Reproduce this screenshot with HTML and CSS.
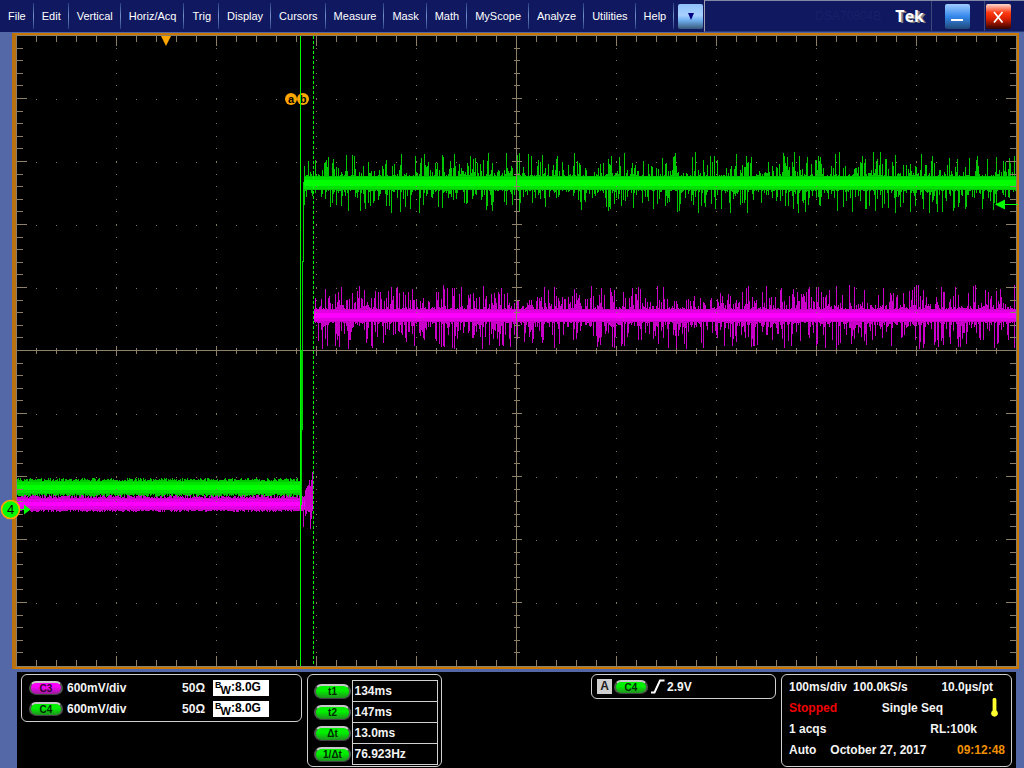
FILE: index.html
```html
<!DOCTYPE html>
<html lang="en">
<head>
<meta charset="utf-8">
<title>Oscilloscope</title>
<link rel="stylesheet" href="styles.css">
</head>
<body>
<header class="menubar">
  <nav class="menus">
    <button class="menu">File</button>
    <button class="menu">Edit</button>
    <button class="menu">Vertical</button>
    <button class="menu">Horiz/Acq</button>
    <button class="menu">Trig</button>
    <button class="menu">Display</button>
    <button class="menu">Cursors</button>
    <button class="menu">Measure</button>
    <button class="menu">Mask</button>
    <button class="menu">Math</button>
    <button class="menu">MyScope</button>
    <button class="menu">Analyze</button>
    <button class="menu">Utilities</button>
    <button class="menu">Help</button>
    <button class="more" aria-label="More menus"><svg width="8" height="8" viewBox="0 0 8 8"><path d="M1 1H7L4 8Z" fill="#000080"/></svg></button>
  </nav>
  <div class="title">
    <span class="model">DSA70804B</span>
    <span class="brand">Tek</span>
    <div class="window-cell"><button class="win minimize" aria-label="Minimize"><svg width="25" height="25" viewBox="0 0 25 25"><path d="M6 15H18V17H6Z" fill="#fff"/></svg></button></div>
    <div class="window-cell last"><button class="win close" aria-label="Close"><svg width="25" height="25" viewBox="0 0 25 25"><path d="M8 8L16.500 18.500M16.500 8L8 18.500" stroke="#fff" stroke-width="1.800"/></svg></button></div>
  </div>
</header>
<main class="scope">
  <svg class="plot" viewBox="16 35 1001 632" preserveAspectRatio="none" role="img" aria-label="Waveform display">
    <g id="traces" shape-rendering="crispEdges"></g>
    <g id="graticule" shape-rendering="crispEdges"></g>
    <g shape-rendering="crispEdges" fill="none">
      <path d="M301.500 350V505M302.500 261V430M303.500 182V262" stroke="#00d400"/>
      <path d="M300.500 36V666" stroke="#00ff00"/>
      <path d="M313.500 36V666" stroke="#00ff00" stroke-dasharray="3 2"/>
    </g>
    <path d="M161 36H171L166 46Z" fill="#ffa500"/>
    <g class="marker">
      <circle cx="291" cy="99" r="6"/><text x="291" y="103">a</text>
      <circle cx="303" cy="99" r="6"/><text x="303" y="103">b</text>
    </g>
    <path d="M300.500 93V105" stroke="#00ff00" shape-rendering="crispEdges"/>
    <path d="M995 204.500L1005 199.500V204H1018V205H1005V209.500Z" fill="#00ff00"/>
    <path d="M20 509H24V504.500L30.500 509.500L24 514.500V510H20Z" fill="#00ff00"/>
    <circle cx="10.500" cy="509.500" r="9" fill="#00ff00" stroke="#ffa500" stroke-width="1.600"/>
    <text class="channel" x="10.500" y="514">4</text>
  </svg>
</main>
<footer class="readouts">
  <section class="panel channels">
    <div class="row"><span class="pill magenta">C3</span><span class="scale">600mV/div</span><span class="ohm">50Ω</span><span class="bw"><span class="b">B</span><span class="w">W</span>:8.0G</span></div>
    <div class="row"><span class="pill">C4</span><span class="scale">600mV/div</span><span class="ohm">50Ω</span><span class="bw"><span class="b">B</span><span class="w">W</span>:8.0G</span></div>
  </section>
  <section class="panel cursors">
    <table>
      <tr><th><span class="pill wide">t1</span></th><td>134ms</td></tr>
      <tr><th><span class="pill wide">t2</span></th><td>147ms</td></tr>
      <tr><th><span class="pill wide">Δt</span></th><td>13.0ms</td></tr>
      <tr><th><span class="pill wide">1/Δt</span></th><td>76.923Hz</td></tr>
    </table>
  </section>
  <section class="panel trigger">
    <span class="source">A</span><span class="pill">C4</span>
    <svg width="15" height="15" viewBox="0 0 15 15"><path d="M1 13.500H4.500L10 1.500H14.500" fill="none" stroke="#fff" stroke-width="2"/></svg>
    <span>2.9V</span>
  </section>
  <section class="panel status">
    <div class="row timebase"><span>100ms/div</span><span>100.0kS/s</span><span class="push">10.0µs/pt</span></div>
    <div class="row sequence"><span class="stopped">Stopped</span><span class="push">Single Seq</span><svg class="thermometer" width="7" height="19" viewBox="0 0 7 19"><path d="M1.600 1.800A1.900 1.900 0 0 1 5.400 1.800V12.500A3.400 3.400 0 1 1 1.600 12.500Z" fill="#ffff30"/></svg></div>
    <div class="row acquisition"><span>1 acqs</span><span class="push">RL:100k</span></div>
    <div class="row clock"><span>Auto</span><span>October 27, 2017</span><time class="push">09:12:48</time></div>
  </section>
</footer>
<script src="scope.js"></script>
</body>
</html>
```

FILE: styles.css
```css
* { box-sizing: border-box; }

body {
  margin: 0;
  min-height: 100vh;
  display: flex;
  flex-direction: column;
  background: #5468a8;
  color: #f4f4f4;
  font-family: "Liberation Sans", Arial, sans-serif;
}

button {
  border: 0;
  padding: 0;
  color: inherit;
  font: inherit;
}

.menubar {
  display: flex;
  height: 32px;
  flex: none;
  background: #101860;
  font-size: 11px;
}

.menus {
  display: flex;
  align-items: center;
  flex: none;
}

.menu {
  height: 26px;
  padding: 0 7px 0 8px;
  background: none;
  border-right: 1px solid;
  border-image: linear-gradient(#28387c, #7090c8, #28387c) 1;
  color: #fff;
}

.more {
  width: 25px;
  height: 25px;
  margin: 0 1px 0 4px;
  display: grid;
  place-items: center;
  border-radius: 2px;
  background: linear-gradient(#90c0f8, #a8d0ff 45%, #70b0f0 65%, #385878);
}

.title {
  flex: 1;
  display: flex;
  align-items: center;
  justify-content: flex-end;
  border-top: 1px solid #8088a8;
  border-left: 1px solid #a0a0b0;
  border-bottom: 1px solid #283878;
}

.model {
  margin-right: 14px;
  color: #182068;
  font-size: 12px;
}

.brand {
  margin-right: 7px;
  color: #fff;
  font: bold 16px "Open Sans", sans-serif;
  text-shadow: 2px 1px #808080;
}

.window-cell {
  width: 53px;
  height: 100%;
  padding: 3px 0 0 13px;
  border-left: 1px solid #404878;
}

.window-cell.last {
  width: 40px;
  padding-left: 1px;
}

.win {
  display: block;
  width: 25px;
  height: 25px;
  border-radius: 2px;
}

.minimize { background: linear-gradient(#a0ccff, #3488ec 50%, #204878); }
.close { background: linear-gradient(#ffd8d0, #ff3810 35%, #d82000 60%, #300400); }

.scope {
  flex: 1;
  display: flex;
  min-height: 300px;
  margin: 1px 5px 3px 12px;
  border: 2px solid #c87800;
  border-left: 4px solid #b87010;
  background: #000;
}

.plot {
  width: 100%;
  min-width: 0;
  height: auto;
  overflow: visible;
}

.marker { fill: #ffa500; }
.marker text,
.channel {
  fill: #000;
  font-size: 11px;
  font-weight: bold;
  text-anchor: middle;
}
.channel { font-size: 13px; font-weight: normal; }

.readouts {
  flex: none;
  display: flex;
  align-items: flex-start;
  gap: 5px;
  margin: 0 8px 0 17px;
  padding: 2px 4px 1px;
  background: #000;
  font-size: 12px;
  font-weight: bold;
}

.panel {
  border: 1px solid #d0d0d0;
  border-radius: 6px;
}

.row {
  display: flex;
  align-items: center;
  height: 21px;
  white-space: nowrap;
}

.pill {
  width: 34px;
  height: 14px;
  flex: none;
  display: block;
  border: 2px solid #505850;
  border-top-color: #c8c8c8;
  border-bottom: 1px solid #404040;
  border-radius: 8px;
  background: linear-gradient(#00f000 40%, #209020);
  color: #002800;
  font-size: 10px;
  line-height: 11px;
  text-align: center;
}

.pill.magenta { background: linear-gradient(#ff00ff 30%, #982098); color: #300030; }
.pill.wide { width: 37px; height: 15px; line-height: 12px; }

.channels {
  width: 281px;
  padding: 2px 7px;
}

.scale { margin-left: 4px; }
.ohm { margin-left: auto; }

.bw {
  display: flex;
  width: 56px;
  height: 16px;
  margin: 0 25px 0 8px;
  padding-left: 2px;
  background: #fff;
  color: #000;
  line-height: 15px;
}

.b { font-size: 9px; line-height: 10px; }
.w { margin-left: -1px; font-size: 11px; line-height: 20px; }

.cursors {
  width: 135px;
  padding: 5px 3px 1px 6px;
}

table {
  width: 100%;
  border-collapse: collapse;
}

th {
  width: 38px;
  padding: 0;
}

td {
  height: 21px;
  padding: 0 2px;
  border: 1px solid #d0d0d0;
  line-height: 16px;
}

.trigger {
  width: 185px;
  height: 25px;
  margin-left: auto;
  padding: 0 5px;
  display: flex;
  align-items: center;
  gap: 2px;
}

.source {
  width: 15px;
  height: 15px;
  background: #d0d0d0;
  color: #202020;
  line-height: 15px;
  text-align: center;
}

.status {
  width: 231px;
  padding: 1px 6px 6px 7px;
}

.push { margin-left: auto; }
.timebase { gap: 6px; padding-right: 12px; }
.sequence { padding-right: 7px; }
.thermometer { margin-left: 48px; }
.acquisition { padding-right: 28px; }
.clock { gap: 14px; }
.stopped { color: #f00000; }
time { color: #f09000; }
```

FILE: scope.js
```js
const NS = "http://www.w3.org/2000/svg";

function addPath(id, d, stroke) {
  const path = document.createElementNS(NS, "path");
  path.setAttribute("d", d);
  path.setAttribute("stroke", stroke);
  path.setAttribute("fill", "none");
  document.getElementById(id).appendChild(path);
}

let seed = 20171027;
function random() {
  seed = (seed * 1664525 + 1013904223) % 4294967296;
  return seed / 4294967296;
}

// One noisy band: top/bottom are the solid edges, up/down the longest spikes.
function band(x0, x1, top, bottom, up, down, power, dim, mid, bright) {
  let spikes = "";
  for (let x = x0; x < x1; x++) {
    const a = Math.round(up * Math.pow(random(), power));
    const b = Math.round(down * Math.pow(random(), power));
    spikes += `M${x + 0.5} ${top - a}V${bottom + b}`;
  }
  addPath("traces", spikes, dim);
  for (let y = top + 1; y < bottom - 1; y++) {
    const edge = y < top + 4 || y > bottom - 5;
    addPath("traces", `M${x0} ${y + 0.5}H${x1}`, edge ? mid : bright);
  }
}

band(17, 301, 481, 494, 3, 3, 1, "#00c800", "#00e400", "#00ff00");
band(17, 313, 498, 510, 3, 2, 1, "#c800c8", "#e400e4", "#ff00ff");
band(304, 1016, 176, 190, 24, 23, 4, "#00c800", "#00e000", "#00ff00");
band(314, 1016, 309, 322, 24, 27, 3, "#c800c8", "#e000e0", "#ff00ff");
addPath("traces", "M303.5 498V527M305.5 490V516M306.5 488V514M307.5 486V511M308.5 485V511M309.5 480V512M310.5 486V529M311.5 480V519M312.5 472V505", "#c800c8");

let lines = "M16 35.500H1017M16.500 35V667M1016.500 35V667M16 666.500H1017";
lines += "M17 350.500H1016M516.500 36V666";
let dots = "";
for (let i = 1; i < 50; i++) {
  const x = 16.5 + i * 20;
  const major = i % 5 === 0;
  const n = major ? 10 : 6;
  lines += `M${x} 36V${36 + n}M${x} 666V${666 - n}`;
  lines += `M${x} ${350.5 - n / 2}V${351 + n / 2}`;
  for (let k = 1; k < 10; k++) dots += `M${x - 0.5} ${36.5 + k * 63}h1`;
}
for (let j = 1; j < 50; j++) {
  const y = Math.round(36 + j * 12.6) - 0.5;
  const n = j % 5 === 0 ? 10 : 6;
  lines += `M17 ${y}H${17 + n}M1016 ${y}H${1016 - n}`;
  lines += `M${516.5 - n / 2} ${y}H${517 + n / 2}`;
  for (let k = 1; k < 10; k++) dots += `M${16 + k * 100} ${y}h1`;
}
addPath("graticule", dots, "#807860");
addPath("graticule", lines, "#8c8068");
```
